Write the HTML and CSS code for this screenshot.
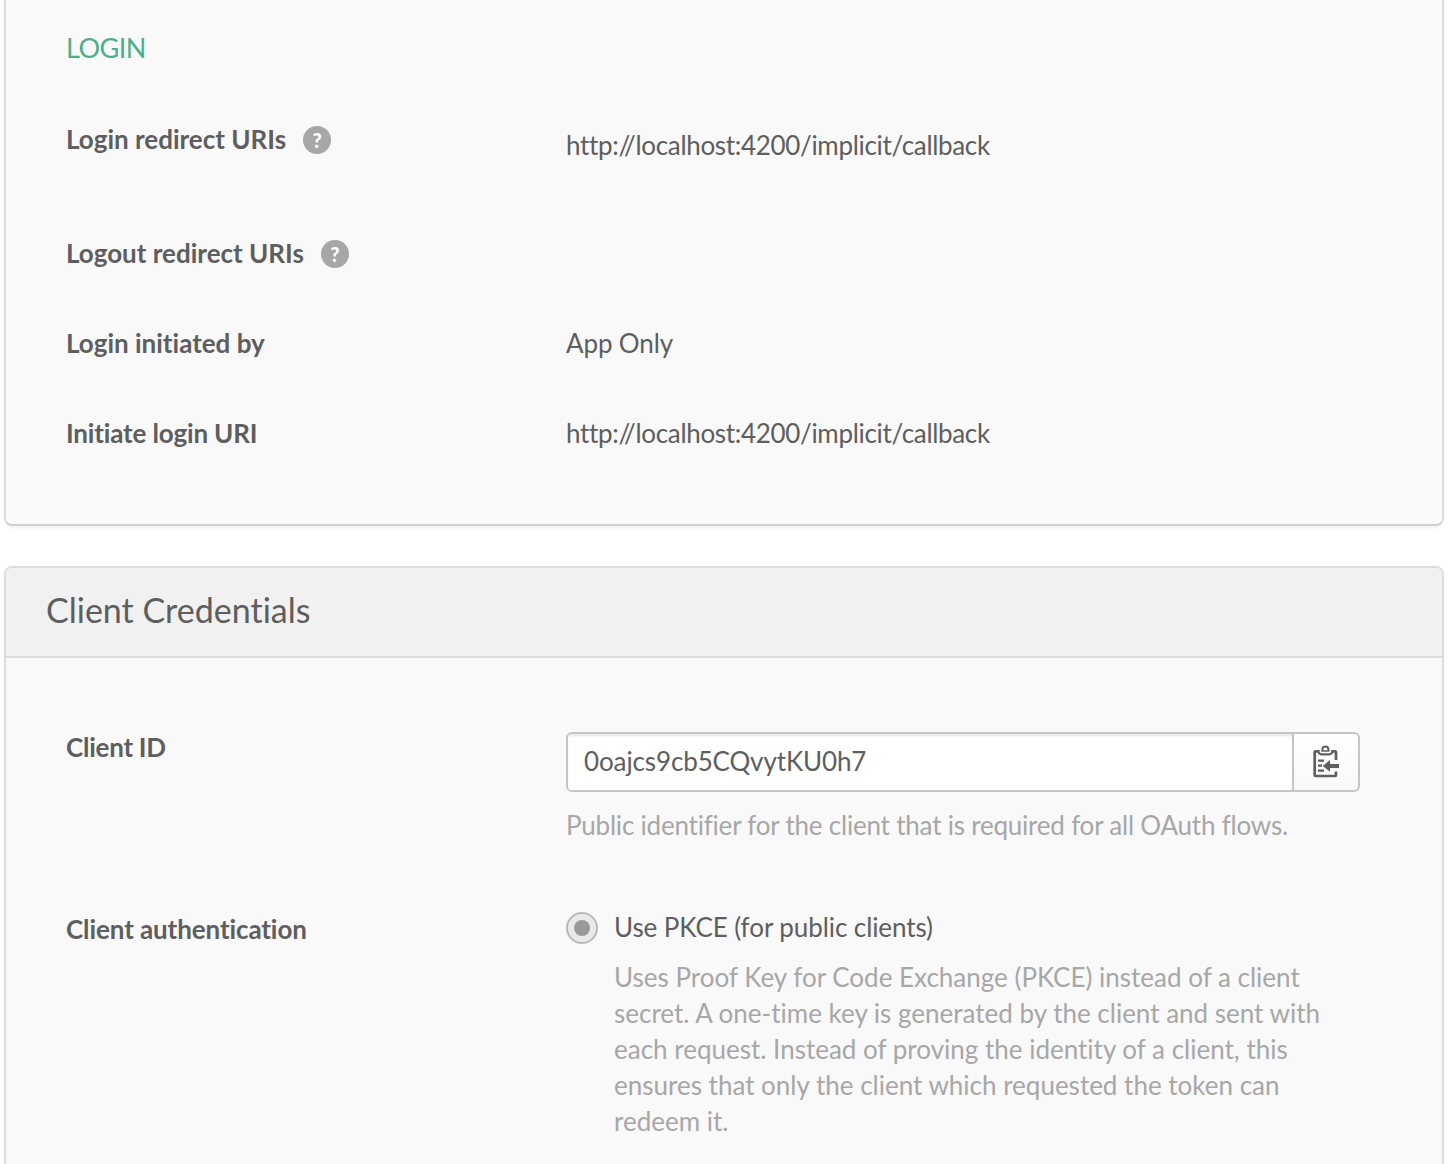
FILE: index.html
```html
<!DOCTYPE html>
<html lang="en">
<head>
<meta charset="utf-8">
<title>Client Credentials</title>
<link rel="stylesheet" href="styles.css">
</head>
<body>
<main class="page">
  <section class="panel panel-login">
    <h3 class="subhead">LOGIN</h3>
    <div class="row row-uris">
      <div class="label"><span>Login redirect URIs</span><span class="help">?</span></div>
      <div class="value value-low"><span class="uri">http://localhost:4200/implicit/callback</span></div>
    </div>
    <div class="row">
      <div class="label"><span>Logout redirect URIs</span><span class="help">?</span></div>
    </div>
    <div class="row">
      <div class="label"><span>Login initiated by</span></div>
      <div class="value"><span class="app-only">App Only</span></div>
    </div>
    <div class="row">
      <div class="label label-initiate"><span>Initiate login URI</span></div>
      <div class="value"><span class="uri">http://localhost:4200/implicit/callback</span></div>
    </div>
  </section>

  <section class="panel panel-credentials">
    <h2 class="panel-title">Client Credentials</h2>
    <div class="panel-body">
      <div class="row row-id">
        <div class="label label-tight"><span>Client ID</span></div>
        <div class="value">
          <div class="copy-field">
            <div class="copy-text">0oajcs9cb5CQvytKU0h7</div>
            <button class="copy-button" aria-label="Copy to clipboard">
              <svg width="28" height="34" viewBox="0 0 28 34" fill="none" stroke="#5e5e5e">
                <path d="M24 15V7.400Q24 6.400 23 6.400H20.500M6 6.400H3.700Q2.700 6.400 2.700 7.400V30Q2.700 31 3.700 31H23Q24 31 24 30V26.500" stroke-width="2.700"/>
                <path d="M6.500 5V6.500Q6.800 9.300 9.500 9.300H17.300Q20 9.300 20.300 6.500V5" stroke-width="2.200"/>
                <path d="M10.400 6V4.500A3 3 0 0 1 16.400 4.500V6" stroke-width="2"/>
                <path d="M9.500 6H17.300" stroke-width="1.600"/>
                <path d="M6 15.700H12M6 20.700H10M6 25.700H12" stroke-width="2.200"/>
                <path d="M10.800 20.900L18 15V18.900H27V22.900H18V26.700Z" fill="#5e5e5e" stroke="none"/>
              </svg>
            </button>
          </div>
          <p class="hint">Public identifier for the client that is required for all OAuth flows.</p>
        </div>
      </div>
      <div class="row">
        <div class="label label-auth"><span>Client authentication</span></div>
        <div class="value option">
          <span class="radio"></span>
          <div class="option-body">
            <span class="option-name">Use PKCE (for public clients)</span>
            <p class="description">Uses Proof Key for Code Exchange (PKCE) instead of a client<br>secret. A one-time key is generated by the client and sent with<br>each request. Instead of proving the identity of a client, this<br>ensures that only the client which requested the token can<br>redeem it.</p>
          </div>
        </div>
      </div>
    </div>
  </section>
</main>
</body>
</html>
```
FILE: styles.css
```css
* { box-sizing: border-box; }
body {
  margin: 0;
  height: 1164px;
  overflow: hidden;
  background: #fff;
  color: #5e5e5e;
  font: 400 26px/36px Lato, "Open Sans", sans-serif;
  font-variant-ligatures: none;
  white-space: nowrap;
}
h2, h3, p { margin: 0; font-weight: 400; }
.page { padding: 0 4px; }
.panel { border: 2px solid #ddd; background: #f9f9f9; }
.panel-login {
  height: 526px;
  padding: 30px 60px 0;
  border-top: 0;
  border-bottom-color: #d0d0d0;
  border-radius: 0 0 8px 8px;
  box-shadow: 0 2px 3px rgba(0, 0, 0, .06);
}
.subhead { margin-bottom: 55px; color: #4cae8b; font-size: 27px; letter-spacing: -.5px; }
.row { display: grid; grid-template-columns: 500px 1fr; margin-bottom: 54px; }
.row-uris { height: 60px; }
.label { display: flex; align-items: flex-start; font-weight: 700; }
.label-tight { letter-spacing: -.25px; }
.label-initiate { letter-spacing: -.16px; }
.help {
  width: 28px;
  height: 28px;
  margin: 5px 0 0 17px;
  border-radius: 50%;
  background: #a7a7a7;
  color: #fff;
  font: 900 20px/28px Lato, sans-serif;
  text-align: center;
}
.uri { letter-spacing: -.32px; }
.app-only { letter-spacing: -.12px; }
.value-low { padding-top: 6px; }
.panel-credentials { height: 640px; margin-top: 40px; border-radius: 8px 8px 0 0; }
.panel-title {
  height: 90px;
  padding: 22px 40px 0;
  border-bottom: 2px solid #ddd;
  border-radius: 6px 6px 0 0;
  background: #f1f1f1;
  font-size: 34px;
  line-height: 40px;
}
.panel-body { padding: 71px 60px 0; }
.row-id { margin-bottom: 66px; }
.copy-field {
  display: flex;
  width: 794px;
  height: 60px;
  margin-top: 3px;
  border: 2px solid #c5c5c5;
  border-radius: 6px;
  overflow: hidden;
}
.copy-text {
  flex: 1;
  padding: 9px 16px;
  background: #fff;
  box-shadow: inset 0 3px 3px -1px rgba(0, 0, 0, .1);
  letter-spacing: -.12px;
}
.copy-button {
  display: grid;
  place-items: center;
  width: 66px;
  padding: 0;
  border: 0;
  border-left: 2px solid #c5c5c5;
  background: linear-gradient(#fff, #f8f8f8);
}
.hint { margin-top: 15px; color: #a7a7a7; letter-spacing: -.21px; }
.label-auth { padding-top: 2px; letter-spacing: -.1px; }
.option { display: flex; gap: 16px; }
.option-name { letter-spacing: -.08px; }
.radio {
  display: grid;
  place-items: center;
  width: 32px;
  height: 32px;
  margin-top: 3px;
  border: 2px solid #b9b9b9;
  border-radius: 50%;
  background: #e9e9e9;
}
.radio::after { content: ""; width: 16px; height: 16px; border-radius: 50%; background: #999; }
.description { margin-top: 14px; color: #a7a7a7; }
```
